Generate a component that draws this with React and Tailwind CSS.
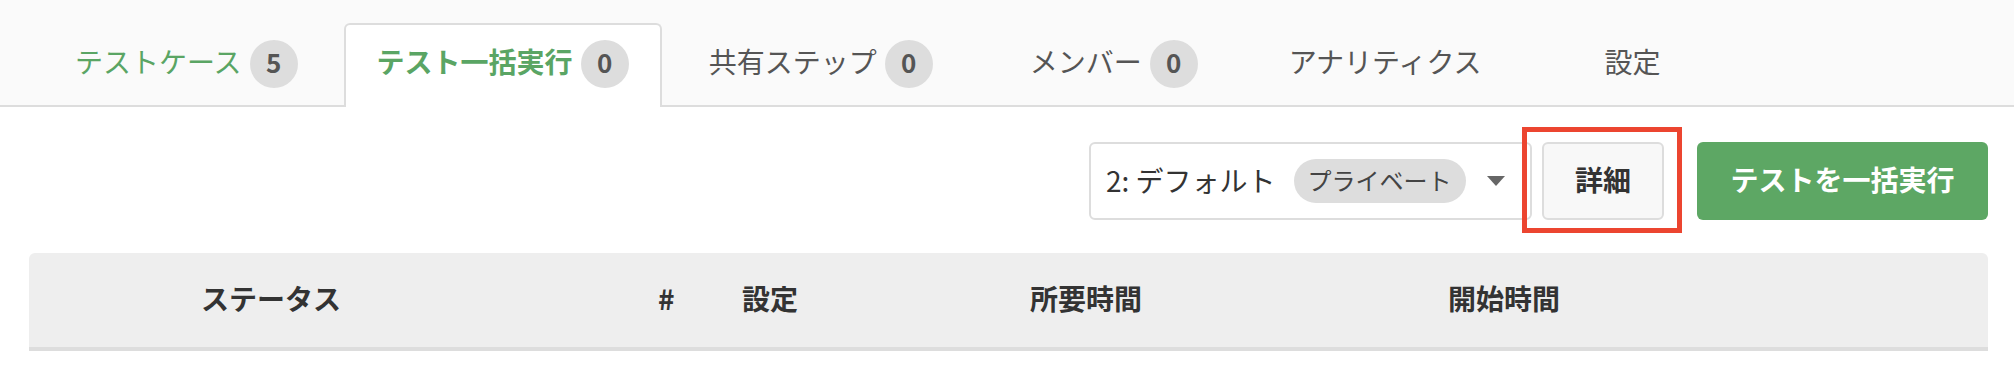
import React from 'react';

const font = { fontFamily: '"Noto Sans CJK JP", "Noto Sans", sans-serif' };

function Badge({ n }) {
  return (
    <span className="ml-[8px] w-[48px] h-[48px] rounded-full bg-[#dddddd] text-[#555555] font-bold text-[26px] leading-none flex items-center justify-center">
      <span className="pb-[3px]">{n}</span>
    </span>
  );
}

function Tab({ label, count, active, green, className }) {
  return (
    <div
      className={
        'h-[84px] -mb-[2px] px-[31px] pb-[5px] flex items-center border-2 border-b-0 rounded-t-[6px] ' +
        (active ? 'bg-white border-[#dddddd] ' : 'border-transparent ') +
        className
      }
    >
      <span
        className={
          'pb-[5px] text-[28px] leading-none whitespace-nowrap ' +
          (green ? 'text-[#5aa564] ' : 'text-[#555555] ') +
          (active ? 'font-bold' : '')
        }
      >
        {label}
      </span>
      {count !== undefined && <Badge n={count} />}
    </div>
  );
}

export default function App() {
  return (
    <div className="w-[2014px] h-[391px] bg-white overflow-hidden" style={font}>
      {/* Tabs */}
      <div className="h-[107px] bg-[#fafafa] border-b-2 border-[#dddddd] flex items-end">
        <Tab label="テストケース" count={5} green className="ml-[42px]" />
        <Tab label="テスト一括実行" count={0} green active className="ml-[13px]" />
        <Tab label="共有ステップ" count={0} className="ml-[14px]" />
        <Tab label="メンバー" count={0} className="ml-[31px]" />
        <Tab label="アナリティクス" className="ml-[25px]" />
        <Tab label="設定" className="ml-[57px]" />
      </div>

      {/* Toolbar */}
      <div className="mt-[35px] pr-[26px] flex justify-end items-center">
        <div className="w-[443px] h-[78px] border-2 border-[#dddddd] rounded-[6px] bg-white flex items-center pl-[15px] pr-[25px]">
          <span className="pb-[3px] text-[28px] leading-none text-[#333333] whitespace-nowrap">2: デフォルト</span>
          <span className="ml-[18px] h-[44px] px-[14px] rounded-full bg-[#dddddd] text-[24px] leading-none text-[#444444] flex items-center whitespace-nowrap">
            <span className="pb-[3px]">プライベート</span>
          </span>
          <span className="ml-auto w-0 h-0 border-l-[9px] border-r-[9px] border-t-[10px] border-l-transparent border-r-transparent border-t-[#666666]" />
        </div>
        <div className="relative ml-[10px]">
          <button className="w-[122px] h-[78px] bg-[#f8f8f8] border-2 border-[#dddddd] rounded-[6px] text-[28px] leading-none font-bold text-[#333333] flex items-center justify-center">
            <span className="pb-[4px]">詳細</span>
          </button>
          <div className="absolute -left-[20px] -right-[18px] -top-[15px] -bottom-[13px] border-[5px] border-[#ec4530] pointer-events-none" />
        </div>
        <button className="ml-[33px] w-[291px] h-[78px] bg-[#5da764] rounded-[6px] text-[28px] leading-none font-bold text-white flex items-center justify-center whitespace-nowrap">
          <span className="pb-[4px]">テストを一括実行</span>
        </button>
      </div>

      {/* Table header */}
      <div className="mt-[33px] ml-[29px] mr-[26px] h-[98px] bg-[#eeeeee] border-b-4 border-[#dddddd] rounded-t-[6px] flex items-center pl-[172px] pb-[5px] text-[28px] leading-none font-bold text-[#333333]">
        <div className="w-[457px]">ステータス</div>
        <div className="w-[84px]">#</div>
        <div className="w-[288px]">設定</div>
        <div className="w-[418px]">所要時間</div>
        <div>開始時間</div>
      </div>
    </div>
  );
}
